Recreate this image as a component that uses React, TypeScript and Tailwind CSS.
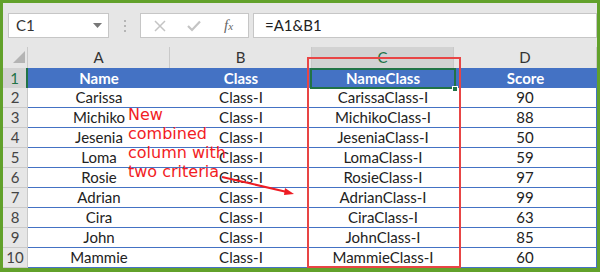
const names = ["Carissa", "Michiko", "Jesenia", "Loma", "Rosie", "Adrian", "Cira", "John", "Mammie"];
const scores = [90, 88, 50, 59, 97, 99, 63, 85, 60];

const cell = "w-[142px] flex items-center justify-center";

const App = () => {
  return (
    <div className="w-[600px] h-[272px] bg-[#62a12b] pt-[3px] px-[3px] pb-[4px]">
      <div className="relative h-full flex flex-col bg-[#e6e6e6] font-['Lato',sans-serif] text-[15px] text-[#222]">
        {/* formula bar */}
        <div className="h-[44px] flex items-start pt-[10px] pl-[5px]">
          <div className="w-[101px] h-[25px] bg-white border border-[#c6c6c6] flex items-center justify-between pl-[7px] pr-[6px]">
            <span className="text-[#333]">C1</span>
            <svg width="9" height="5" viewBox="0 0 9 5">
              <polygon points="0,0 9,0 4.5,5" fill="#777" />
            </svg>
          </div>
          <div className="w-[31px] h-[25px] flex flex-col items-center justify-center gap-[3px]">
            <div className="w-[2px] h-[2px] bg-[#b5b5b5]" />
            <div className="w-[2px] h-[2px] bg-[#b5b5b5]" />
            <div className="w-[2px] h-[2px] bg-[#b5b5b5]" />
          </div>
          <div className="w-[109px] h-[25px] bg-white border border-[#c6c6c6] flex items-center">
            <svg className="ml-[13px]" width="12" height="12" viewBox="0 0 12 12">
              <path d="M1 1 L11 11 M11 1 L1 11" stroke="#c4c4c4" strokeWidth="1.5" fill="none" />
            </svg>
            <svg className="ml-[21px]" width="14" height="12" viewBox="0 0 14 12">
              <path d="M1 6 L5 10 L13 1.5" stroke="#c4c4c4" strokeWidth="2.2" fill="none" />
            </svg>
            <span className="ml-[23px] font-['Liberation_Serif',serif] italic text-[15px] text-[#666]">
              f<span className="text-[11px]">x</span>
            </span>
          </div>
          <div className="ml-[4px] flex-1 h-[25px] bg-white border border-[#c6c6c6] flex items-center pl-[11px] text-[#222]">
            =A1&amp;B1
          </div>
        </div>

        {/* column headers */}
        <div className="h-[21px] flex text-[#333]">
          <div className="w-[25px] relative border-r border-[#c9c9c9]">
            <svg className="absolute left-[10px] top-[4px]" width="12" height="12" viewBox="0 0 12 12">
              <polygon points="12,0 12,12 0,12" fill="#b4b4b4" />
            </svg>
          </div>
          <div className={`${cell} border-r border-[#c9c9c9]`}>A</div>
          <div className={`${cell} border-r border-[#c9c9c9]`}>B</div>
          <div className={`${cell} bg-[#d2d2d2] text-[#217346] border-r border-[#c9c9c9]`}>C</div>
          <div className="flex-1 flex items-center justify-center border-r border-[#c9c9c9]">D</div>
        </div>

        {/* row 1 */}
        <div className="h-[20px] flex">
          <div className="w-[25px] flex items-center justify-center bg-[#d2d2d2] text-[#217346] border-r-2 border-[#217346]">1</div>
          <div className="flex-1 flex bg-[#4472c4] text-white font-bold">
            <div className={cell}>Name</div>
            <div className={cell}>Class</div>
            <div className={`${cell} relative`}>
              NameClass
              <div className="absolute left-[-2px] right-[-2px] top-0 bottom-[-1px] border-2 border-[#217346]" />
              <div className="absolute right-[-4px] bottom-[-4px] w-[6px] h-[6px] bg-[#217346] border border-white" />
            </div>
            <div className="flex-1 flex items-center justify-center">Score</div>
          </div>
        </div>

        {names.map((n, i) => (
          <div key={n} className="h-[20px] flex">
            <div className="w-[25px] flex items-center justify-center text-[#444] border-r border-b border-[#c9c9c9]">
              {i + 2}
            </div>
            <div className="flex-1 flex bg-white border-b border-r border-[#4472c4]">
              <div className={cell}>{n}</div>
              <div className={cell}>Class-I</div>
              <div className={cell}>{n}Class-I</div>
              <div className="flex-1 flex items-center justify-center">{scores[i]}</div>
            </div>
          </div>
        ))}

        {/* red highlight around column C */}
        <div className="absolute left-[304px] top-[54px] w-[154px] h-[211px] border-2 border-[#e84545] pointer-events-none" />

        {/* annotation */}
        <div className="absolute left-[125px] top-[102px] font-['DejaVu_Sans',sans-serif] text-[16px] leading-[19px] text-[#f21c24]">
          New
          <br />
          combined
          <br />
          column with
          <br />
          two criteria
        </div>
        <svg className="absolute inset-0 pointer-events-none" width="594" height="265">
          <line x1="219" y1="174" x2="284" y2="189" stroke="#ee1c24" strokeWidth="2" />
          <polygon points="291,191 282,185 281,192" fill="#ee1c24" />
        </svg>
      </div>
    </div>
  );
};

export default App;
